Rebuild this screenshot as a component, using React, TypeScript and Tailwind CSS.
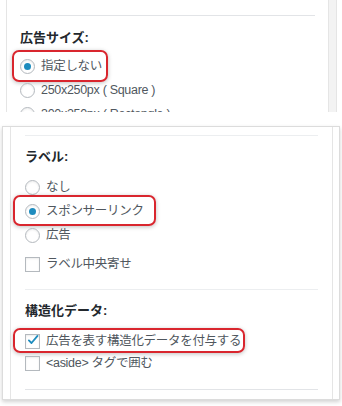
import type { ReactNode } from "react";

const font = { fontFamily: '"Liberation Sans", "Noto Sans CJK JP", sans-serif' };

function Radio({ checked }: { checked?: boolean }) {
  return (
    <span className="flex h-[15px] w-[15px] shrink-0 items-center justify-center rounded-full border border-[#b4b9be] bg-white shadow-[inset_0_1px_2px_rgba(0,0,0,0.08)]">
      {checked && <span className="h-[7px] w-[7px] rounded-full bg-[#1e8cbe]" />}
    </span>
  );
}

function Check({ checked }: { checked?: boolean }) {
  return (
    <span className="flex h-[15px] w-[15px] shrink-0 items-center justify-center border border-[#b4b9be] bg-white shadow-[inset_0_1px_2px_rgba(0,0,0,0.08)]">
      {checked && (
        <svg viewBox="0 0 16 16" className="-mt-[2px] ml-[1px] h-[16px] w-[16px]">
          <path d="M2.5 8.5 L6 12 L14 2.5" fill="none" stroke="#1e8cbe" strokeWidth="2.4" strokeLinecap="round" strokeLinejoin="round" />
        </svg>
      )}
    </span>
  );
}

function Row({ children, control, box, h = "h-[24px]" }: { children: ReactNode; control: ReactNode; box?: string; h?: string }) {
  return (
    <div className={`relative flex items-center gap-[6px] text-[12.5px] text-[#50575e] ${h}`}>
      {box && <span className={`pointer-events-none absolute rounded-[7px] border-2 border-[#d9262e] shadow-[0_1px_4px_rgba(0,0,0,0.25)] ${box}`} />}
      {control}
      <span className="tracking-[-0.3px]">{children}</span>
    </div>
  );
}

export default function App() {
  return (
    <div className="h-[406px] w-[342px] overflow-hidden bg-white" style={font}>
      {/* upper crop */}
      <div className="flex h-[112px] overflow-hidden">
        <div className="ml-[6px] w-[323px] shrink-0 border-x border-[#e5e5e5] bg-white px-[13px] pt-[15px]">
          <div className="h-px bg-[#e2e4e7]" />
          <div className="mt-[13px] text-[13px] font-bold leading-[18px] text-[#23282d]">広告サイズ:</div>
          <div className="mt-[7px]">
            <Row control={<Radio checked />} box="-left-[8px] -top-[4px] -bottom-[4px] w-[96px]">指定しない</Row>
            <Row control={<Radio />}>250x250px ( Square )</Row>
            <Row control={<Radio />}>300x250px ( Rectangle )</Row>
          </div>
        </div>
        <div className="w-[8px] shrink-0 border-r border-[#e5e5e5] bg-[#f3f3f3]" />
      </div>

      {/* lower crop */}
      <div className="mx-[2px] mt-[14px] h-[274px] border border-[#dcdcdc] shadow-[0_2px_4px_rgba(0,0,0,0.18)]">
        <div className="ml-[7px] mr-[6px] h-full border-x border-[#e5e5e5] bg-white px-[14px] pt-[8px]">
          <div className="h-px bg-[#eceef0]" />
          <div className="mt-[12px] text-[13px] font-bold leading-[18px] text-[#23282d]">ラベル:</div>
          <div className="mt-[9px]">
            <Row control={<Radio />}>なし</Row>
            <Row control={<Radio checked />} box="-left-[12px] -top-[4px] -bottom-[3px] w-[143px]">スポンサーリンク</Row>
            <Row control={<Radio />}>広告</Row>
          </div>
          <div className="mt-[5px]">
            <Row control={<Check />}>ラベル中央寄せ</Row>
          </div>
          <div className="mt-[13px] h-px bg-[#eceef0]" />
          <div className="mt-[12px] text-[13px] font-bold leading-[18px] text-[#23282d]">構造化データ:</div>
          <div className="mt-[10px]">
            <Row h="h-[22px]" control={<Check checked />} box="-left-[12px] -top-[2px] -bottom-[1px] w-[232px]">広告を表す構造化データを付与する</Row>
            <Row h="h-[22px]" control={<Check />}>&lt;aside&gt; タグで囲む</Row>
          </div>
          <div className="mt-[15px] h-px bg-[#e2e4e7]" />
        </div>
      </div>
    </div>
  );
}
